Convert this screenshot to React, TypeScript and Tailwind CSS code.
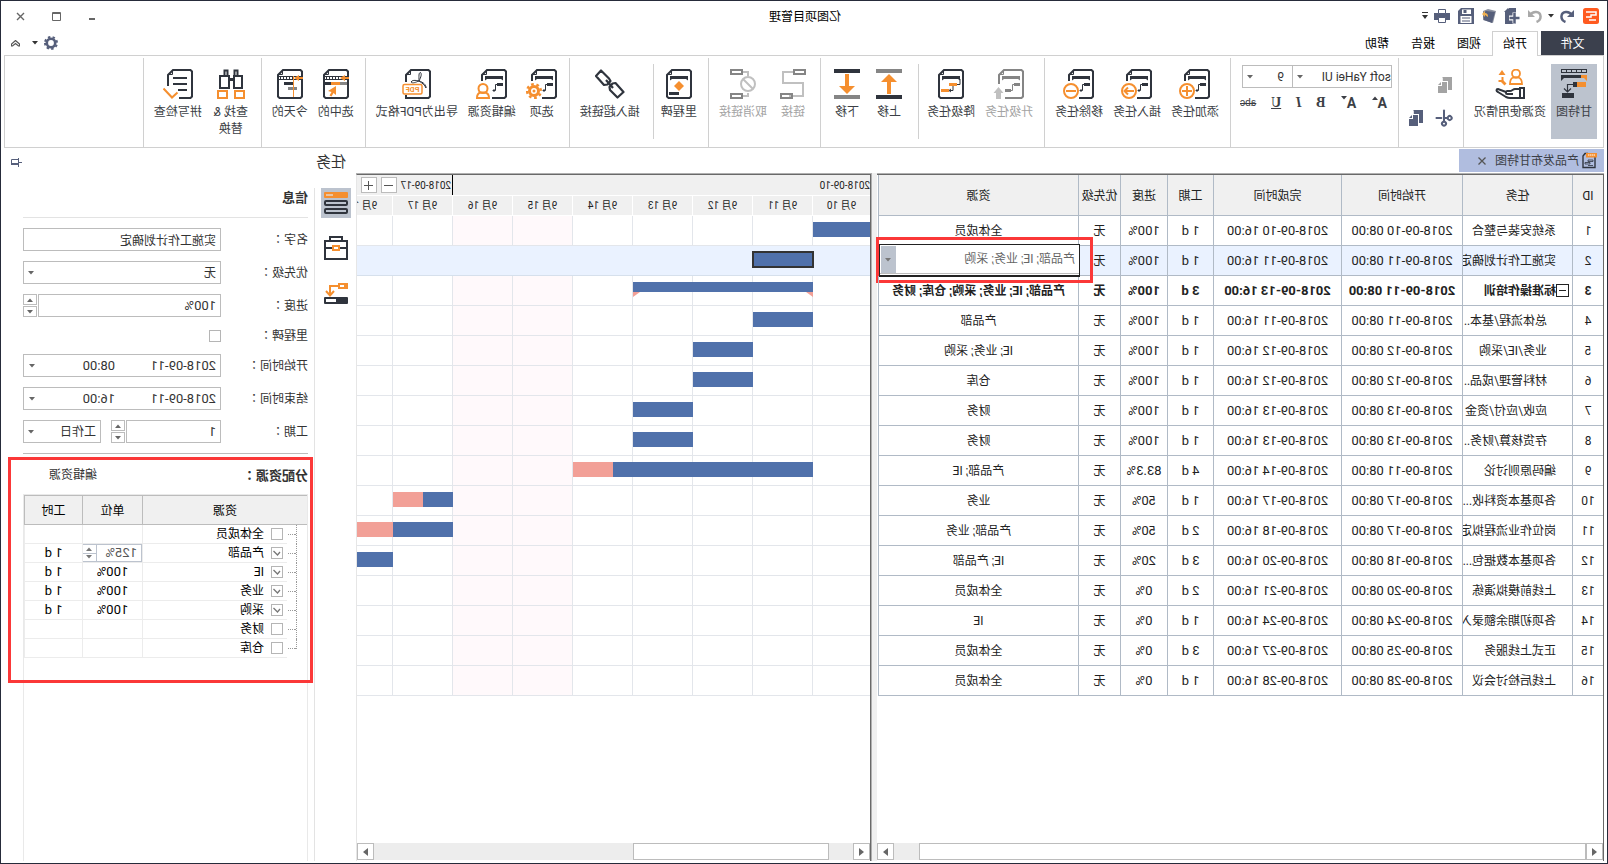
import { useState } from "react";
import type { ReactNode } from "react";
import { LuScissors } from "react-icons/lu";

const DARK = "#2f343d";
const ORANGE = "#f58f2f";
const SLATE = "#565f7b";

const DAY = 60;
// the first day column is partly scrolled out of view
const SCROLLED = 3;

interface Task {
  id: number;
  name: string;
  level?: number;
  start: string;
  end: string;
  days: string;
  done: string;
  res: string;
  bold?: boolean;
  bar?: { from: number; len: number; pct: number };
}

const tasks: Task[] = [
  { id: 1, name: "系统安装与整合", start: "2018-09-10 08:00", end: "2018-09-10 16:00", days: "1 d", done: "100%", res: "全体成员", bar: { from: 0, len: 1, pct: 100 } },
  { id: 2, name: "实施工作计划确定", start: "2018-09-11 08:00", end: "2018-09-11 16:00", days: "1 d", done: "100%", res: "", bar: { from: 1, len: 1, pct: 100 } },
  { id: 3, name: "标准操作培训", start: "2018-09-11 08:00", end: "2018-09-13 16:00", days: "3 d", done: "100%", res: "产品部; IE; 业务; 采购; 仓库; 财务", bold: true, bar: { from: 1, len: 3, pct: 100 } },
  { id: 4, name: "总体流程/基本..", level: 2, start: "2018-09-11 08:00", end: "2018-09-11 16:00", days: "1 d", done: "100%", res: "产品部", bar: { from: 1, len: 1, pct: 100 } },
  { id: 5, name: "业务/IE/采购", level: 2, start: "2018-09-12 08:00", end: "2018-09-12 16:00", days: "1 d", done: "100%", res: "IE; 业务; 采购", bar: { from: 2, len: 1, pct: 100 } },
  { id: 6, name: "材料管理/成品..", level: 2, start: "2018-09-12 08:00", end: "2018-09-12 16:00", days: "1 d", done: "100%", res: "仓库", bar: { from: 2, len: 1, pct: 100 } },
  { id: 7, name: "应收/应付/资金", level: 2, start: "2018-09-13 08:00", end: "2018-09-13 16:00", days: "1 d", done: "100%", res: "财务", bar: { from: 3, len: 1, pct: 100 } },
  { id: 8, name: "存货核算/财务..", level: 2, start: "2018-09-13 08:00", end: "2018-09-13 16:00", days: "1 d", done: "100%", res: "财务", bar: { from: 3, len: 1, pct: 100 } },
  { id: 9, name: "编码原则讨论", start: "2018-09-11 08:00", end: "2018-09-14 16:00", days: "4 d", done: "83.3%", res: "产品部; IE", bar: { from: 1, len: 4, pct: 83.3 } },
  { id: 10, name: "各项基本资料收...", start: "2018-09-17 08:00", end: "2018-09-17 16:00", days: "1 d", done: "50%", res: "业务", bar: { from: 7, len: 1, pct: 50 } },
  { id: 11, name: "岗位作业流程拟定", start: "2018-09-17 08:00", end: "2018-09-18 16:00", days: "2 d", done: "50%", res: "产品部; 业务", bar: { from: 7, len: 2, pct: 50 } },
  { id: 12, name: "各项基本数据包...", start: "2018-09-18 08:00", end: "2018-09-20 16:00", days: "3 d", done: "20%", res: "IE; 产品部", bar: { from: 8, len: 3, pct: 20 } },
  { id: 13, name: "上线前模拟演练", start: "2018-09-20 08:00", end: "2018-09-21 16:00", days: "2 d", done: "0%", res: "全体成员" },
  { id: 14, name: "各项初期余额录入", start: "2018-09-24 08:00", end: "2018-09-24 16:00", days: "1 d", done: "0%", res: "IE" },
  { id: 15, name: "正式上线服务", start: "2018-09-25 08:00", end: "2018-09-27 16:00", days: "3 d", done: "0%", res: "全体成员" },
  { id: 16, name: "上线后检讨会议", start: "2018-09-28 08:00", end: "2018-09-28 16:00", days: "1 d", done: "0%", res: "全体成员" },
];

const resources = [
  { name: "全体成员", on: false },
  { name: "产品部", on: true, unit: "125%", editing: true },
  { name: "IE", on: true, unit: "100%" },
  { name: "业务", on: true, unit: "100%" },
  { name: "采购", on: true, unit: "100%" },
  { name: "财务", on: false },
  { name: "仓库", on: false },
];

/* ---------- small parts ---------- */

const Caret = ({ className = "" }: { className?: string }) => (
  <svg className={className} width="6" height="4" viewBox="0 0 6 4">
    <path d="M0 0h6L3 3.5z" fill="currentColor" />
  </svg>
);

const Select = (props: { label: string; value: string; className?: string; id?: string; pad?: string }) => (
  <div className={`relative h-[23px] ${props.className ?? ""}`}>
    <select
      id={props.id}
      aria-label={props.label}
      className={`block w-full h-full appearance-none bg-white border border-[#bcbcbc] text-[12px] leading-[20px] text-[#333] outline-none ${props.pad ?? "pl-1"}`}
    >
      <option>{props.value}</option>
    </select>
    <Caret className="absolute right-[5px] top-[10px] text-[#666] pointer-events-none" />
  </div>
);

const Spinner = () => (
  <span className="flex flex-col justify-between w-[14px] h-[23px]">
    <button aria-label="增加" className="flex items-center justify-center h-[11px] border border-[#bcbcbc] text-[#666]">
      <Caret className="rotate-180" />
    </button>
    <button aria-label="减少" className="flex items-center justify-center h-[11px] border border-[#bcbcbc] text-[#666]">
      <Caret />
    </button>
  </span>
);

const CheckBox = (props: { id?: string; label: string; checked?: boolean }) => {
  const [on, setOn] = useState<boolean>(!!props.checked);
  return (
    <span className="relative block w-[12px] h-[12px]">
      <input
        id={props.id}
        aria-label={props.label}
        type="checkbox"
        checked={on}
        onChange={() => setOn(!on)}
        className="block appearance-none w-[12px] h-[12px] bg-white border border-[#b5b5b5]"
      />
      {on && (
        <svg className="absolute inset-0 pointer-events-none" width="12" height="12" viewBox="0 0 12 12">
          <path d="M3 5l2.500 3L9.500 4" fill="none" stroke="#777" strokeWidth="1.300" />
        </svg>
      )}
    </span>
  );
};

/* ---------- ribbon icons ---------- */

const DocIcon = (props: { color?: string; badge?: boolean; plain?: boolean; children?: ReactNode }) => {
  const c = props.color ?? DARK;
  return (
    <svg width={props.badge ? 31 : 26} height="30" viewBox={props.badge ? "0 0 31 30" : "0 0 26 30"} fill="none">
      <path
        d={props.badge ? "M15 29H2.500L1 27.500v-25L2.500 1H20l5 5v6" : "M1 2.500L2.500 1H20l5 5v21.500L23.500 29h-21L1 27.500z"}
        stroke={c}
        strokeWidth="2"
      />
      <path d="M20.500 1v4.500H25" stroke={c} strokeWidth="1" />
      {!props.plain && <path d="M4 7h18v4.500l-2-1.500H6l-2 1.500z" fill={c} />}
      {props.children}
    </svg>
  );
};

const Elbow = ({ color = DARK }: { color?: string }) => (
  <>
    <path d="M4 14h6v3H4z" fill={color} />
    <path d="M10 15.500h1.500v6H14M12.500 20l1.500 1.500-1.500 1.500" stroke={color} strokeWidth="1" />
  </>
);

const AddTaskIcon = () => (
  <DocIcon badge>
    <Elbow />
    <circle cx="23" cy="22" r="7" stroke={ORANGE} strokeWidth="2" />
    <path d="M18 22h10M23 17v10" stroke={ORANGE} strokeWidth="2" />
  </DocIcon>
);

const InsertTaskIcon = () => (
  <DocIcon badge>
    <Elbow />
    <circle cx="23" cy="22" r="7" stroke={ORANGE} strokeWidth="2" />
    <path d="M18 22h9M24 18.500l3.500 3.500-3.500 3.500" stroke={ORANGE} strokeWidth="2" />
  </DocIcon>
);

const RemoveTaskIcon = () => (
  <DocIcon badge>
    <Elbow />
    <circle cx="23" cy="22" r="7" stroke={ORANGE} strokeWidth="2" />
    <path d="M18 22h10" stroke={ORANGE} strokeWidth="2" />
  </DocIcon>
);

const UpgradeIcon = () => (
  <svg width="31" height="30" viewBox="0 0 31 30" fill="none">
    <path d="M19 29H2.500L1 27.500v-25L2.500 1H20l5 5v9" stroke="#858585" strokeWidth="2" />
    <path d="M20.500 1v4.500H25" stroke="#858585" />
    <path d="M4 7h18v4.500l-2-1.500H6l-2 1.500zM4 14h6v3H4zM13 20h6v3h-6z" fill="#858585" />
    <path d="M10 15.500h1.500v6H13" stroke="#858585" />
    <path d="M25.500 18l5 6H28v6h-5v-6h-2.500z" fill="#c0c0c0" />
  </svg>
);

const DowngradeIcon = () => (
  <DocIcon>
    <path d="M7 14h8v3H7zM15 20h8v3h-8z" fill={ORANGE} />
    <path d="M4 10v5.500h3M11 17v4.500h3.500M13 20l2 1.500-2 1.500" stroke={DARK} />
  </DocIcon>
);

const MoveIcon = ({ up }: { up?: boolean }) => (
  <svg width="26" height="30" viewBox="0 0 26 30">
    <path d="M0 0h26v4H0z" fill={up ? "#858585" : DARK} />
    <path d="M0 26h26v4H0z" fill={up ? DARK : "#858585"} />
    <path d={up ? "M13 5l8 8h-6v12h-4V13H5z" : "M13 25l8-8h-6V5h-4v12H5z"} fill={ORANGE} />
  </svg>
);

const LinkIcon = () => (
  <svg width="26" height="30" viewBox="0 0 26 30" fill="none">
    <path d="M13 3h10v11H3v13h11M17 27h-4" stroke="#c0c0c0" strokeWidth="2" />
    <path d="M1 1h11v4H1zM14 25h11v4H14z" stroke="#858585" strokeWidth="2" />
  </svg>
);

const UnlinkIcon = () => (
  <svg width="26" height="30" viewBox="0 0 26 30" fill="none">
    <path d="M13 3H8v4M13 27H8v-3" stroke="#c0c0c0" strokeWidth="2" />
    <circle cx="8" cy="15" r="7" stroke="#c0c0c0" strokeWidth="2" />
    <path d="M3 20l10-10" stroke="#c0c0c0" strokeWidth="2" />
    <path d="M14 1h11v4H14zM14 25h11v4H14z" stroke="#858585" strokeWidth="2" />
  </svg>
);

const MilestoneIcon = () => (
  <DocIcon>
    <path d="M13 12l5 5-5 5-5-5z" fill={ORANGE} />
    <path d="M13 23h10v3H13z" fill={DARK} />
  </DocIcon>
);

const HyperlinkIcon = () => (
  <svg width="30" height="30" viewBox="0 0 30 30" fill="none" stroke={DARK} strokeWidth="2.200" strokeLinejoin="round">
    <path d="M24 1.500l5 5.500-8 9-3.500-.5-3-3.500 1.500-2.500z" />
    <path d="M9.500 14l3 .5 3 3.500-.5 3-7.500 7.500L1.500 23z" />
    <path d="M12 19l7-8" />
  </svg>
);

const OptionsIcon = () => (
  <DocIcon badge>
    <Elbow />
    <circle cx="23" cy="22" r="4.500" stroke={ORANGE} strokeWidth="3" />
    <circle cx="23" cy="22" r="6.800" stroke={ORANGE} strokeWidth="2.500" strokeDasharray="2.700 2.640" />
    <circle cx="23" cy="22" r="1.500" fill={ORANGE} />
  </DocIcon>
);

const EditResourceIcon = () => (
  <DocIcon badge>
    <Elbow />
    <circle cx="24" cy="19.500" r="4.500" stroke={ORANGE} strokeWidth="2" fill="#fff" />
    <path d="M18 29c0-3 2-5 3.500-5.500h5c2 .5 3.500 2.500 3.500 5.500z" stroke={ORANGE} strokeWidth="2" />
  </DocIcon>
);

const PdfIcon = () => (
  <svg width="30" height="30" viewBox="0 0 30 30" fill="none">
    <path d="M26 26v3H3.500L2 27.500V2.500L3.500 1H21l5 5v7" stroke={DARK} strokeWidth="2" />
    <path d="M21.500 1v4.500H26" stroke={DARK} />
    <path d="M13 12c-2-4-3-7-1.500-8.500 2 0 1.500 4 1.500 8.500zm0 0c4-1 7-1 8 1-1.500 2-5 0-8-1zm0 0c-3 2-6 4-7 7-.5-3 3-6 7-7z" stroke={DARK} />
    <rect x="10" y="15.500" width="19" height="9.500" rx="1.500" fill="#fff" stroke={ORANGE} strokeWidth="1.500" />
    <text x="19.500" y="23" fontSize="7.500" fontWeight="700" textAnchor="middle" fill={ORANGE}>PDF</text>
  </svg>
);

const SelectedIcon = () => (
  <DocIcon plain>
    <path d="M1 7.500h24M1 10.500h24M10.500 7v4M13.500 7v4M16.500 7v4M19.500 7v4M22.500 7v4" stroke={DARK} />
    <path d="M0 8h4V6l5 3-5 3v-2H0z" fill={ORANGE} />
    <path d="M2 13h7v3H2z" fill="#858585" />
    <path d="M9 13h9v3H9z" fill={ORANGE} />
    <path d="M18 13h6v3h-6z" fill={DARK} />
    <path d="M13 17l8 5-3.500 1 2 3.500-2 1-2-3.500L13 26z" fill={ORANGE} />
  </DocIcon>
);

const TodayIcon = () => (
  <DocIcon plain>
    <path d="M1 7.500h24M1 10.500h24M10.500 7v4M13.500 7v4M16.500 7v4M19.500 7v4M22.500 7v4" stroke={DARK} />
    <path d="M10 13h9v3h-9z" fill={DARK} />
    <path d="M6 18h9v3H6z" fill="#858585" />
    <path d="M0 8h4V6l5 3-5 3v-2H0zM9 7h1v21H9z" fill={ORANGE} />
  </DocIcon>
);

const FindIcon = () => (
  <svg width="28" height="30" viewBox="0 0 28 30" fill="none">
    <path d="M3 7h8v12H3zM16 7h9v12h-9z" stroke={DARK} strokeWidth="2" />
    <path d="M7.500 6V1.500h3V6M17.500 6V1.500h3V6" stroke={DARK} strokeWidth="2" />
    <path d="M12 9h4v3h-4z" fill={DARK} />
    <path d="M1 22h9v7H1zM18 22h9v7h-9z" stroke={ORANGE} strokeWidth="2" />
  </svg>
);

const SpellIcon = () => (
  <svg width="30" height="30" viewBox="0 0 30 30" fill="none">
    <path d="M14 29H2.500L1 27.500v-25L2.500 1H20l5 5v11" stroke={DARK} strokeWidth="2" />
    <path d="M20.500 1v4.500H25" stroke={DARK} />
    <path d="M6 9h14M6 15h14M6 21h9" stroke={DARK} strokeWidth="2" />
    <path d="M15.500 23.500l5.500 5 8.500-9" stroke={ORANGE} strokeWidth="2" />
  </svg>
);

const GanttIcon = () => (
  <svg width="26" height="30" viewBox="0 0 26 30" fill="none">
    <path d="M0 0h26v4H0z" fill={DARK} />
    <path d="M1 1h4v2H1zM6 1h4v2H6zM11 1h4v2h-4zM16 1h4v2h-4zM21 1h4v2h-4z" fill="#bcc3ce" />
    <path d="M5 6h21v6l-3-3H5z" fill={DARK} />
    <path d="M0 6h6v3H3l-3 3z" fill={ORANGE} />
    <path d="M1 13h9v5H1z" fill={ORANGE} />
    <path d="M10 13h4v5h-4z" fill={DARK} />
    <path d="M14 15.500h5.500V23M16 19.500l3.500 3.500 3.500-3.500" stroke={DARK} strokeWidth="1.200" />
    <path d="M13 24h12v5H13z" fill={DARK} />
  </svg>
);

const UsageIcon = () => (
  <svg width="30" height="30" viewBox="0 0 30 30" fill="none">
    <circle cx="9" cy="4.500" r="4" stroke={ORANGE} strokeWidth="1.800" />
    <path d="M3 15c0-4 2-6 3.500-6.500h5c2 .5 3.500 2.500 3.500 6.500z" stroke={ORANGE} strokeWidth="1.800" />
    <path d="M23 1l3.500 5h-7z" fill={ORANGE} />
    <path d="M19.500 15.500l4-4" stroke={ORANGE} strokeWidth="2.800" />
    <path d="M22.500 8v4h4" stroke={ORANGE} strokeWidth="2" />
    <path d="M1 19h4v10H1z" stroke={DARK} strokeWidth="2" />
    <path d="M5 20h5c2 0 3 2 5 2h3c1.500 0 1.500 3 0 3h-6M19 23l8-3c2 0 2 2 0 3l-8 5c-1 .5-2 1-4 1H5" stroke={DARK} strokeWidth="2" />
  </svg>
);

const PagesIcon = ({ color }: { color: string }) => (
  <svg width="15" height="16" viewBox="0 0 15 16" fill={color}>
    <path d="M5 5h5v4h4v7H5z" />
    <path d="M11 5l3 3h-3z" />
    <path d="M0 0h9l1 1v3H4v9H0z" />
    <path d="M9.500 1v3.500h-5V14" stroke="#fff" fill="none" strokeWidth=".8" />
  </svg>
);

/* ---------- ribbon ---------- */

const RibbonButton = (props: { label: string; icon: ReactNode; active?: boolean; disabled?: boolean; className?: string }) => (
  <button
    disabled={props.disabled}
    className={`flex flex-col items-center shrink-0 h-[75px] min-w-[42px] px-[5px] pt-[5px] ${props.active ? "bg-[#bcc3ce]" : ""} ${
      props.disabled ? "text-[#a3a3a3]" : "text-[#3c3f46]"
    } ${props.className ?? ""}`}
  >
    {props.icon}
    <span className="mt-[5px] text-[12px] leading-[17px] whitespace-pre">{props.label}</span>
  </button>
);

const Group = ({ children, className = "" }: { children: ReactNode; className?: string }) => (
  <div className={`flex shrink-0 pl-[6px] pr-[5px] pt-[6px] mt-[2px] border-r border-[#d0d0d0] ${className}`}>{children}</div>
);

const Ribbon = () => (
  <div className="flex h-[93px] mx-[3px] border border-[#d0d0d0] overflow-hidden">
    <Group>
      <RibbonButton label="甘特图" icon={<GanttIcon />} active />
      <RibbonButton label="资源使用情况" icon={<UsageIcon />} />
    </Group>

    <Group className="w-[65px]">
      <div className="grid grid-cols-2 gap-x-[13px] gap-y-[17px] pl-[5px] pt-[13px] content-start">
        <button aria-label="粘贴" disabled><PagesIcon color="#a3a3a3" /></button>
        <span />
        <button aria-label="剪切" className="text-[#565f7b]"><LuScissors className="w-4 h-4 -rotate-45" strokeWidth={3} /></button>
        <button aria-label="复制"><PagesIcon color={SLATE} /></button>
      </div>
    </Group>

    <Group className="w-[168px]">
      <div className="pt-px">
        <div className="flex">
          <Select label="字体" value="soft YaHei UI" className="w-[100px] -mr-px" pad="pl-0" />
          <Select label="字号" value="9" className="w-[51px]" pad="pl-2" />
        </div>
        <div className="flex justify-between items-center mt-[6px] pl-[5px] w-[152px] h-[18px] text-[#3c3f46] text-[14px] leading-[18px] font-bold">
          <button aria-label="增大字号" className="flex w-4">A<Caret className="rotate-180 mt-0.5" /></button>
          <button aria-label="减小字号" className="flex w-4">A<Caret className="mt-0.5" /></button>
          <button className="font-['Liberation_Serif',serif]">B</button>
          <button className="font-['Liberation_Serif',serif] italic">I</button>
          <button className="font-['Liberation_Serif',serif] underline">U</button>
          <button className="text-[10px] font-normal line-through">abc</button>
        </div>
      </div>
    </Group>

    <Group>
      <RibbonButton label="添加任务" icon={<AddTaskIcon />} />
      <RibbonButton label="插入任务" icon={<InsertTaskIcon />} />
      <RibbonButton label="移除任务" icon={<RemoveTaskIcon />} />
    </Group>

    <Group>
      <RibbonButton label="升级任务" icon={<UpgradeIcon />} disabled />
      <RibbonButton label="降级任务" icon={<DowngradeIcon />} />
      <span className="w-px h-[75px] ml-[3px] mr-2 bg-[#d0d0d0]" />
      <RibbonButton label="上移" icon={<MoveIcon up />} />
      <RibbonButton label="下移" icon={<MoveIcon />} />
    </Group>

    <Group>
      <RibbonButton label="链接" icon={<LinkIcon />} disabled />
      <RibbonButton label="取消链接" icon={<UnlinkIcon />} disabled />
    </Group>

    <Group>
      <RibbonButton label="里程碑" icon={<MilestoneIcon />} />
      <span className="w-px h-[75px] ml-[2px] mr-2 bg-[#d0d0d0]" />
      <RibbonButton label="插入超链接" icon={<HyperlinkIcon />} />
    </Group>

    <Group>
      <RibbonButton label="选项" icon={<OptionsIcon />} />
      <RibbonButton label="编辑资源" icon={<EditResourceIcon />} />
      <RibbonButton label="导出为PDF格式" icon={<PdfIcon />} className="w-[92px]" />
    </Group>

    <Group>
      <RibbonButton label="选中的" icon={<SelectedIcon />} />
      <RibbonButton label="今天的" icon={<TodayIcon />} />
    </Group>

    <Group>
      <RibbonButton label={"查找 &\n替换"} icon={<FindIcon />} className="w-[48px]" />
      <RibbonButton label="拼写检查" icon={<SpellIcon />} />
    </Group>
  </div>
);

/* ---------- title bar and tabs ---------- */

const TitleBar = () => (
  <header className="grid grid-cols-[1fr_auto_1fr] items-center h-[30px] pl-2 pr-[10px]">
    <div className="flex items-center text-[#565f7b]">
      <svg width="16" height="16" viewBox="0 0 16 16" fill="none">
        <rect width="16" height="16" rx="2.500" fill="#ff5a1f" />
        <path d="M13 4H3v3h5v2h5M3 12h7" stroke="#fff" strokeWidth="1.500" />
      </svg>
      <button aria-label="撤销" className="ml-2">
        <svg width="16" height="14" viewBox="0 0 16 14" fill="none">
          <path d="M3 6C6 1.500 13 2 13.500 7c.3 3-1.500 5-4 6" stroke="currentColor" strokeWidth="2.500" />
          <path d="M1 1v7h7z" fill="currentColor" />
        </svg>
      </button>
      <Caret className="ml-[5px] text-[#333]" />
      <button aria-label="重做" className="ml-[5px] text-[#a9a9a9]">
        <svg width="16" height="14" viewBox="0 0 16 14" fill="none">
          <path d="M13 6C10 1.500 3 2 2.500 7c-.3 3 1.500 5 4 6" stroke="currentColor" strokeWidth="2.500" />
          <path d="M15 1v7H8z" fill="currentColor" />
        </svg>
      </button>
      <button aria-label="新建" className="ml-[7px]">
        <svg width="16" height="16" viewBox="0 0 16 16" fill="currentColor">
          <path d="M4 0h7l1 1v3h3v12H4z" />
          <path d="M12 0l4 4h-4z" />
          <path d="M5 4.500v11M0 10h11" stroke="#fff" strokeWidth="5" />
          <path d="M5.500 5v10M.5 10h10" stroke="currentColor" strokeWidth="2.500" />
        </svg>
      </button>
      <button aria-label="打开" className="ml-[7px]">
        <svg width="16" height="16" viewBox="0 0 16 16">
          <path d="M1 3l8-2 5 2v9l-10 3z" fill="#8a8f9e" />
          <path d="M2 4l9-1 3 2-1 7-8 3z" fill="currentColor" />
          <path d="M9 9c0-3 1-4 3-4V3l3 3-3 3V7c-1 0-1 1-3 2z" fill="#f0b050" />
        </svg>
      </button>
      <button aria-label="保存" className="ml-[7px]">
        <svg width="16" height="16" viewBox="0 0 16 16">
          <path d="M0 0h13l3 3v13H0z" fill="currentColor" />
          <path d="M3 1.500h9V6H3zM2.500 8h11v7h-11z" fill="#fff" />
          <path d="M7.500 2h3v3h-3zM4 9.500h8v1H4zM4 12.500h8v1H4z" fill="currentColor" />
        </svg>
      </button>
      <button aria-label="打印" className="ml-2">
        <svg width="16" height="16" viewBox="0 0 16 16" fill="currentColor">
          <path d="M0 5h16v7H0z" />
          <path d="M4.500 1.500h7v4h-7zM4.500 9.500h7v5h-7z" fill="#fff" stroke="currentColor" />
        </svg>
      </button>
      <button aria-label="更多" className="ml-[6px] text-[#333]">
        <svg width="6" height="8" viewBox="0 0 6 8" fill="currentColor"><path d="M0 0h6v1H0zM0 3h6L3 7z" /></svg>
      </button>
    </div>
    <h1 className="pt-px text-[12px] text-black">亿图项目管理</h1>
    <div className="flex justify-end items-center gap-[27px] pr-[5px] text-[#666]">
      <button aria-label="最小化"><svg width="7" height="9" viewBox="0 0 7 9"><path d="M0 6h6v2H0z" fill="currentColor" /></svg></button>
      <button aria-label="最大化"><svg width="9" height="9" viewBox="0 0 9 9"><path d="M.5.500h8v8h-8zM0 1.500h9" fill="none" stroke="currentColor" /></svg></button>
      <button aria-label="关闭"><svg width="9" height="9" viewBox="0 0 9 9"><path d="M1 1l7 7M8 1L1 8" stroke="currentColor" strokeWidth="1.400" /></svg></button>
    </div>
  </header>
);

const Tabs = () => (
  <nav className="relative z-10 flex h-[24px] mx-[3px] pr-[7px] text-[12px] text-black">
    <button className="w-[63px] pt-px bg-[#3b404d] text-white">文件</button>
    <button className="w-[46px] ml-[3px] h-[25px] bg-white border border-b-0 border-[#d0d0d0]">开始</button>
    <button className="w-[46px] pt-px">视图</button>
    <button className="w-[46px] pt-px">报告</button>
    <button className="w-[46px] pt-px">帮助</button>
    <div className="flex flex-1 justify-end items-center">
      <button aria-label="设置" className="flex items-center text-[#333]">
        <svg width="14" height="14" viewBox="0 0 14 14" fill="none" stroke={SLATE}>
          <circle cx="7" cy="7" r="4.200" strokeWidth="2.600" />
          <circle cx="7" cy="7" r="6" strokeWidth="2" strokeDasharray="2.400 2.310" />
        </svg>
        <Caret className="ml-[6px]" />
      </button>
      <button aria-label="收起功能区" className="ml-3">
        <svg width="9" height="7" viewBox="0 0 9 7" fill="none" stroke="#555" strokeWidth="1.200"><path d="M.5 4l4-3.500 4 3.500v2h-1L4.500 3.500 1.500 6h-1z" /></svg>
      </button>
    </div>
  </nav>
);

/* ---------- task table ---------- */

const ScrollBar = ({ lead }: { lead?: boolean }) => (
  <div className="flex h-[17px] mb-px shrink-0 bg-[#ededed]">
    <button aria-label="向左滚动" className="flex items-center justify-center w-[17px] bg-white border border-[#bcbcbc]">
      <svg width="5" height="8" viewBox="0 0 5 8"><path d="M5 0v8L0 4z" fill="#666" /></svg>
    </button>
    {lead && <span className="w-6" />}
    <span className={lead ? "w-[196px] bg-white border border-[#bcbcbc]" : "w-[667px] bg-white border border-[#bcbcbc]"} />
    <button aria-label="向右滚动" className="flex items-center justify-center w-[17px] ml-auto bg-white border border-[#bcbcbc]">
      <svg width="5" height="8" viewBox="0 0 5 8"><path d="M0 0v8l5-4z" fill="#666" /></svg>
    </button>
  </div>
);

const cell = "border-r border-b border-[#b0bac6] p-0 text-center whitespace-nowrap";

const TaskTable = () => (
  <div className="flex flex-col w-[727px] shrink-0 border-t border-[#b0b0b0]">
    <div className="flex flex-col flex-1 border-t border-l border-[#696969]">
      <table className="table-fixed border-separate border-spacing-0 w-[725px] text-[12px] text-[#222]">
        <colgroup>
          <col className="w-[31px]" />
          <col className="w-[110px]" />
          <col className="w-[121px]" />
          <col className="w-[128px]" />
          <col className="w-[46px]" />
          <col className="w-[47px]" />
          <col className="w-[42px]" />
          <col className="w-[200px]" />
        </colgroup>
        <thead>
          <tr className="h-[41px] bg-[#f0f0f0]">
            {["ID", "任务", "开始时间", "完成时间", "工期", "进度", "优先级", "资源"].map((h) => (
              <th key={h} className={`${cell} h-[41px] pt-px font-normal`}>{h}</th>
            ))}
          </tr>
        </thead>
        <tbody>
          {tasks.map((t) => (
            <tr key={t.id} className={`${t.id === 2 ? "bg-[#eaf2ff]" : ""} ${t.bold ? "font-bold" : ""}`}>
              <td className={`${cell} h-[30px]`}>{t.id}</td>
              <td className={cell}>
                <div className={`flex items-center overflow-hidden ${t.bold ? "pl-[3px]" : t.level ? "pl-[25px]" : "pl-[16px]"}`}>
                  {t.bold && (
                    <button aria-label="折叠" className="flex items-center justify-center shrink-0 w-[13px] h-[13px] border border-[#222]">
                      <span className="w-[7px] h-px bg-[#222]" />
                    </button>
                  )}
                  {t.name}
                </div>
              </td>
              <td className={`${cell} text-[13px]`}>{t.start}</td>
              <td className={`${cell} text-[13px]`}>{t.end}</td>
              <td className={`${cell} text-[13px]`}>{t.days}</td>
              <td className={`${cell} text-[13px]`}>{t.done}</td>
              <td className={cell}>无</td>
              <td className={`${cell} relative`}>
                {t.id === 2 ? (
                  <>
                    <div className="absolute -left-[2px] -top-[2px] w-[201px] h-[33px] border border-b-2 border-[#222] bg-white">
                      <select aria-label="资源" className="block w-full h-[29px] appearance-none border-b border-[#bcbcbc] bg-white pl-1 text-[12px] text-[#666] outline-none">
                        <option>产品部; IE; 业务; 采购</option>
                      </select>
                      <span className="absolute right-px top-px flex items-center justify-center w-[15px] h-[27px] bg-[#bcc3ce] text-[#777] pointer-events-none">
                        <Caret />
                      </span>
                    </div>
                    <div className="absolute -left-[15px] -top-[9px] w-[217px] h-[46px] border-3 border-[#fb3838] pointer-events-none" />
                  </>
                ) : (
                  t.res
                )}
              </td>
            </tr>
          ))}
        </tbody>
      </table>
      <div className="flex-1" />
      <ScrollBar />
    </div>
  </div>
);

/* ---------- gantt chart ---------- */

const days = ["9月 10", "9月 11", "9月 12", "9月 13", "9月 14", "9月 15", "9月 16", "9月 17", "9月 18"];

const Bar = ({ task }: { task: Task }) => {
  if (!task.bar) return null;
  const { from, len, pct } = task.bar;
  const left = from * DAY - SCROLLED;
  const width = len * DAY;
  const selected = task.id === 2;

  if (task.bold) {
    return (
      <div className="absolute top-[6px] h-[15px]" style={{ left, width }}>
        <div className="h-[10px] bg-[#5071ab]" />
        <svg className="absolute left-0 top-[10px]" width="7" height="5" viewBox="0 0 7 5"><path d="M0 0h7L0 5z" fill="#f2a097" /></svg>
        <svg className="absolute right-0 top-[10px]" width="7" height="5" viewBox="0 0 7 5"><path d="M0 0h7v5z" fill="#f2a097" /></svg>
      </div>
    );
  }
  return (
    <div
      className={`absolute top-[6px] h-[15px] bg-[#f2a097] ${selected ? "outline-2 -outline-offset-1 outline-[#333]" : ""}`}
      style={{ left, width }}
    >
      <div className="h-full bg-[#5071ab]" style={{ width: `${pct}%` }} />
    </div>
  );
};

const Gantt = () => (
  <div className="flex flex-col flex-1 min-w-0 border-t border-l border-[#b0b0b0]">
    <div className="flex flex-col flex-1 border-t border-l border-t-[#696969] border-l-[#696969] border-r border-r-[#e6e6e6]">
      <div className="flex h-[21px] bg-[#f0f0f0] border-b border-white text-[10px] leading-[21px] text-[#222]">
        <span className="w-[417px] shrink-0">2018-09-10</span>
        <span className="w-[54px] pl-px border-l border-black whitespace-nowrap shrink-0">2018-09-17</span>
        <span className="flex gap-1 ml-auto pr-1 pt-0.5">
          {["−", "+"].map((s) => (
            <button key={s} aria-label={s === "+" ? "放大" : "缩小"} className="flex items-center justify-center w-[16px] h-[16px] bg-white border border-[#bcbcbc]">
              <svg width="9" height="9" viewBox="0 0 9 9"><path d={s === "+" ? "M0 4.500h9M4.500 0v9" : "M0 4.500h9"} stroke="#555" /></svg>
            </button>
          ))}
        </span>
      </div>
      <div className="flex h-[20px] overflow-hidden bg-[#f0f0f0] border-b border-white text-[10px] leading-[19px] text-[#222]">
        {days.map((d, i) => (
          <span key={d} className={`shrink-0 text-center whitespace-nowrap ${i === 0 ? "w-[57px]" : "w-[60px] border-l border-white"}`}>{d}</span>
        ))}
      </div>
      <div className="relative overflow-hidden">
        <div className="absolute inset-0 flex">
          {days.map((d, i) => (
            <span
              key={d}
              className={`shrink-0 ${i === 0 ? "w-[57px]" : "w-[60px] border-l border-[#e3e6eb]"} ${i === 5 || i === 6 ? "bg-[#fff9fb]" : ""}`}
            />
          ))}
        </div>
        {tasks.map((t) => (
          <div key={t.id} className={`relative h-[30px] border-b ${t.id === 2 ? "bg-[#eaf2ff] border-[#d6e0ec]" : "border-[#e3e6eb]"}`}>
            <Bar task={t} />
          </div>
        ))}
      </div>
      <div className="flex-1" />
      <ScrollBar lead />
    </div>
  </div>
);

/* ---------- task panel ---------- */

// Traditional Chinese fonts centre the full-width colon in its box
const Colon = () => <span className="font-['Noto_Sans_CJK_TC',sans-serif]">：</span>;

const Field = (props: { label: string; htmlFor: string; children: ReactNode; short?: boolean }) => (
  <div className={`flex items-center ${props.short ? "h-[17px]" : "h-[23px]"}`}>
    <label htmlFor={props.htmlFor} className="w-[87px] shrink-0">{props.label}<Colon /></label>
    <div className="flex flex-1 items-center">{props.children}</div>
  </div>
);

const DateTime = ({ id, date, time }: { id: string; date: string; time: string }) => (
  <div className="flex items-center w-full h-[23px] pl-1 pr-[5px] border border-[#bcbcbc] text-[13px]">
    <input id={id} className="w-[101px] outline-none" defaultValue={date} />
    <input aria-label="时间" className="w-[60px] outline-none" defaultValue={time} />
    <Caret className="ml-auto text-[#666]" />
  </div>
);

const textBox = "h-[23px] min-w-0 pl-1 border border-[#bcbcbc] outline-none";

const TaskPanel = () => (
  <aside className="flex flex-col w-[355px] shrink-0">
    <div className="flex items-center justify-between h-[28px] mb-3 pl-[10px] pr-[10px]">
      <h2 className="text-[15px] text-[#333]">任务</h2>
      <button aria-label="固定">
        <svg width="11" height="9" viewBox="0 0 11 9" fill="none" stroke={SLATE}>
          <path d="M0 4.500h3M3.500 0v9M3.500 1.500h7v5h-7" />
          <path d="M3 5h8v2H3z" fill={SLATE} stroke="none" />
        </svg>
      </button>
    </div>
    <div className="flex flex-1">
      <div className="flex flex-col items-start gap-[15px] w-[41px] pl-[5px]">
        <button aria-label="信息" className="flex items-center justify-center w-[30px] h-[30px] bg-[#bcc3ce]">
          <svg width="24" height="22" viewBox="0 0 24 22" fill="none">
            <rect width="24" height="6" rx="1" fill={ORANGE} />
            <path d="M15 2h7v2h-7z" fill="#e8c4a4" />
            <rect x="1" y="9" width="22" height="4" rx="1" stroke={DARK} strokeWidth="2" />
            <rect x="1" y="17" width="22" height="4" rx="1" stroke={DARK} strokeWidth="2" />
          </svg>
        </button>
        <button aria-label="资源" className="flex items-center justify-center w-[30px] h-[30px]">
          <svg width="24" height="24" viewBox="0 0 24 24" fill="none" stroke={DARK} strokeWidth="2">
            <path d="M6 5V1h12v4M1 5h22v18H1zM1 12h22" />
            <rect x="9" y="10" width="6" height="4" fill="#fff" stroke={ORANGE} />
          </svg>
        </button>
        <button aria-label="链接" className="flex items-center justify-center w-[30px] h-[30px]">
          <svg width="24" height="22" viewBox="0 0 24 22" fill="none">
            <path d="M0 1h4v6H0z" fill={ORANGE} />
            <path d="M1 2h8v4H1z" stroke={ORANGE} strokeWidth="2" />
            <path d="M10 4h8v9M14 9l4 4.500 4-4.500" stroke={ORANGE} strokeWidth="2" />
            <rect y="15" width="24" height="7" rx="1" fill={DARK} />
            <path d="M12 17h10v3H12z" fill="#fff" />
          </svg>
        </button>
      </div>
      <div className="flex flex-col flex-1 border-l border-[#e3e3e3] pl-[6px] pr-[22px] text-[12px] text-[#333]">
        <h3 className="h-[30px] border-b border-[#e3e3e3] text-[13px] leading-[20px] font-bold">信息</h3>

        <div className="flex flex-col gap-[10px] py-[10px]">
          <Field label="名字" htmlFor="name">
            <input id="name" className={`${textBox} flex-1`} defaultValue="实施工作计划确定" />
          </Field>
          <Field label="优先级" htmlFor="priority">
            <Select id="priority" label="优先级" value="无" className="w-full" />
          </Field>
          <Field label="进度" htmlFor="progress">
            <input id="progress" className={`${textBox} flex-1 mr-px text-[13px]`} defaultValue="100%" />
            <Spinner />
          </Field>
          <Field label="里程碑" htmlFor="milestone" short>
            <CheckBox id="milestone" label="里程碑" />
          </Field>
          <Field label="开始时间" htmlFor="start">
            <DateTime id="start" date="2018-09-11" time="08:00" />
          </Field>
          <Field label="结束时间" htmlFor="end">
            <DateTime id="end" date="2018-09-11" time="16:00" />
          </Field>
          <Field label="工期" htmlFor="duration">
            <input id="duration" className={`${textBox} w-[95px] mr-px text-[13px]`} defaultValue="1" />
            <Spinner />
            <Select label="单位" value="工作日" className="w-[78px] ml-auto" />
          </Field>
        </div>

        <section className="relative flex flex-col flex-1 border-t border-[#bcbcbc]">
          <div className="flex items-center justify-between h-[40px] pt-[2px] pr-[26px]">
            <h3 className="font-bold text-[13px]">分配资源<Colon /></h3>
            <button>编辑资源</button>
          </div>
          <div className="flex-1 border border-b-0 border-[#e9e9e9]">
            <table className="table-fixed w-full border-separate border-spacing-0 text-black">
              <colgroup>
                <col />
                <col className="w-[60px]" />
                <col className="w-[58px]" />
              </colgroup>
              <thead>
                <tr className="bg-[#f0f0f0]">
                  {["资源", "单位", "工时"].map((h) => (
                    <th key={h} className="h-[30px] p-0 pt-px font-normal border-y border-r border-[#bcbcbc]">{h}</th>
                  ))}
                </tr>
              </thead>
              <tbody>
                {resources.map((r, i) => (
                  <tr key={r.name}>
                    <td className="h-[19px] p-0 border-r border-[#ececec]">
                      <div className="flex h-[19px]">
                        <span className={`w-[9px] ml-[10px] border-l border-dotted border-[#999] ${i === resources.length - 1 ? "h-[10px]" : ""}`}>
                          <span className="block h-[10px] border-b border-dotted border-[#999]" />
                        </span>
                        <label className="flex flex-1 items-center ml-px pl-1 gap-[7px] border-b border-[#ececec] leading-[19px]">
                          <CheckBox label={r.name} checked={r.on} />
                          {r.name}
                        </label>
                      </div>
                    </td>
                    <td className="p-0 text-center text-[13px] leading-[18px] border-r border-b border-[#ececec]">
                      {r.editing ? (
                        <div className="flex h-[18px] border-y border-[#bcc3ce]">
                          <input aria-label="单位" className="w-[46px] pl-1 border-x border-[#bcc3ce] text-[#555] outline-none" defaultValue={r.unit} />
                          <span className="flex flex-col flex-1 text-[#777]">
                            <button aria-label="增加" className="flex flex-1 items-center justify-center border-b border-[#bcc3ce]"><Caret className="rotate-180" /></button>
                            <button aria-label="减少" className="flex flex-1 items-center justify-center"><Caret /></button>
                          </span>
                        </div>
                      ) : (
                        r.unit
                      )}
                    </td>
                    <td className="p-0 text-center text-[13px] leading-[18px] border-r border-b border-[#ececec]">{r.on ? "1 d" : ""}</td>
                  </tr>
                ))}
              </tbody>
            </table>
          </div>
          <div className="absolute -left-[5px] -right-[15px] top-[3px] h-[226px] border-3 border-[#fb3838] pointer-events-none" />
        </section>
      </div>
    </div>
  </aside>
);

export default function App() {
  return (
    <div className="flex flex-col w-full h-screen min-h-[720px] -scale-x-100 overflow-hidden border border-[#262b3a] bg-white pb-[2px] font-['Roboto','Noto_Sans_CJK_SC',sans-serif]">
      <TitleBar />
      <Tabs />
      <Ribbon />
      <main className="flex flex-1 min-h-0">
        <div className="flex flex-col flex-1 min-w-0 pl-[3px]">
          <div className="h-[25px] pt-px">
            <div className="flex items-center w-[145px] h-[23px] pl-[7px] bg-[#b0bddf] text-[12px] text-[#3c3f46]">
              <svg width="16" height="17" viewBox="0 0 16 17" fill="none">
                <path d="M2 5v10.500h12V4l-2-2.500H9" stroke={DARK} strokeWidth="1.400" />
                <path d="M0 1h11v4.500H0z" fill={ORANGE} />
                <path d="M2 3h7" stroke="#fff" strokeDasharray="1.500 .5" />
                <path d="M4 8h5v1.500H4zM7 10.500h5v1.500H7zM4 13.500h5" stroke={DARK} strokeWidth=".8" />
              </svg>
              <span className="ml-0.5 pt-px">产品发布甘特图</span>
              <button aria-label="关闭标签" className="ml-[9px]">
                <svg width="8" height="8" viewBox="0 0 8 8"><path d="M.5.500l7 7M7.500.500l-7 7" stroke="#555" strokeWidth="1.300" /></svg>
              </button>
            </div>
          </div>
          <div className="flex flex-1 min-h-0">
            <TaskTable />
            <div className="w-[5px] shrink-0 bg-[#f0f0f0]" />
            <Gantt />
          </div>
        </div>
        <TaskPanel />
      </main>
    </div>
  );
}
